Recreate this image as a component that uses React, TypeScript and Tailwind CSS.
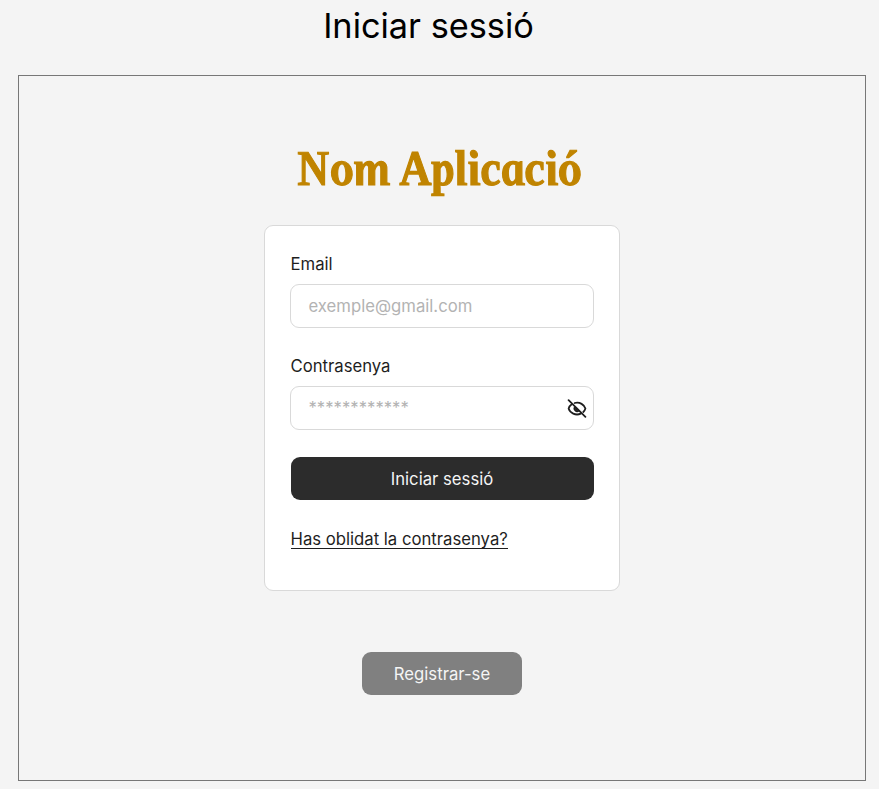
import type { ReactNode } from "react";

function Field({ label, children }: { label: string; children: ReactNode }) {
  return (
    <label className="block">
      <span className="block h-6 leading-6">{label}</span>
      <span className="mt-[7.5px] -ml-[0.5px] flex h-[44.5px] w-[304px] items-center justify-between rounded-[9px] border border-[#d9d9d9] bg-white pl-[17.5px] pr-[6px] pt-px text-[#b3b3b3]">
        {children}
      </span>
    </label>
  );
}

function EyeOff() {
  return (
    <svg className="mt-px h-5 w-5" viewBox="0 0 20 20" fill="none" stroke="#1e1e1e" strokeWidth="1.8" strokeLinecap="round" strokeLinejoin="round">
      <path d="M7.6 4C12.9 2.6 17.3 5.8 18.4 9.6c-.4 1.4-1.1 2.5-2.1 3.4M4.7 5.2C3.1 6.3 2 8 1.6 9.6c1.3 4.5 7 7.3 12.2 5.1" />
      <path d="M8.1 7.8a2.7 2.7 0 0 0 3.8 3.8M1.6 1.2l16.8 16.6" />
      <path d="M8.5 8.2l3.1 3.1-1.7.8-2-1.8z" fill="#1e1e1e" strokeWidth=".5" />
    </svg>
  );
}

export default function App() {
  return (
    <main className="flex h-[789px] w-[879px] flex-col overflow-hidden bg-[#f4f4f4] font-['Inter',sans-serif] text-[16.7px] text-[#1e1e1e]">
      <h1 className="-ml-[22px] h-[75px] pt-[4px] text-center text-[34.3px] leading-[44px] text-black">Iniciar sessió</h1>
      <section className="ml-[18px] flex h-[706px] w-[848px] flex-col items-center border border-[#777777]">
        <h2 className="mt-[61px] -ml-[6px] h-[62px] origin-center skew-x-[10deg] scale-x-[0.935] whitespace-nowrap font-['Liberation_Serif',serif] text-[50px] leading-[62px] font-bold italic text-[#c08400] [-webkit-text-stroke:1.2px_#c08400]">Nom Aplicació</h2>
        <form className="mt-[26px] h-[366px] w-[356px] rounded-[9px] border border-[#d9d9d9] bg-white px-[25.5px] pt-[26px]">
          <Field label="Email">exemple@gmail.com</Field>
          <div className="mt-[26px]">
            <Field label="Contrasenya">
              <span>************</span>
              <EyeOff />
            </Field>
          </div>
          <button type="button" className="mt-[26.5px] block h-[43.5px] w-[303px] rounded-[9px] bg-[#2c2c2c] pt-[2px] text-[#f5f5f5]">Iniciar sessió</button>
          <a className="mt-[26px] inline-block h-[22.5px] border-b border-[#1e1e1e] leading-[26px] whitespace-nowrap">Has oblidat la contrasenya?</a>
        </form>
        <button type="button" className="mt-[60.5px] h-[43.5px] w-[160px] rounded-[9px] bg-[#808080] pt-[2px] text-[#f5f5f5]">Registrar-se</button>
      </section>
    </main>
  );
}
